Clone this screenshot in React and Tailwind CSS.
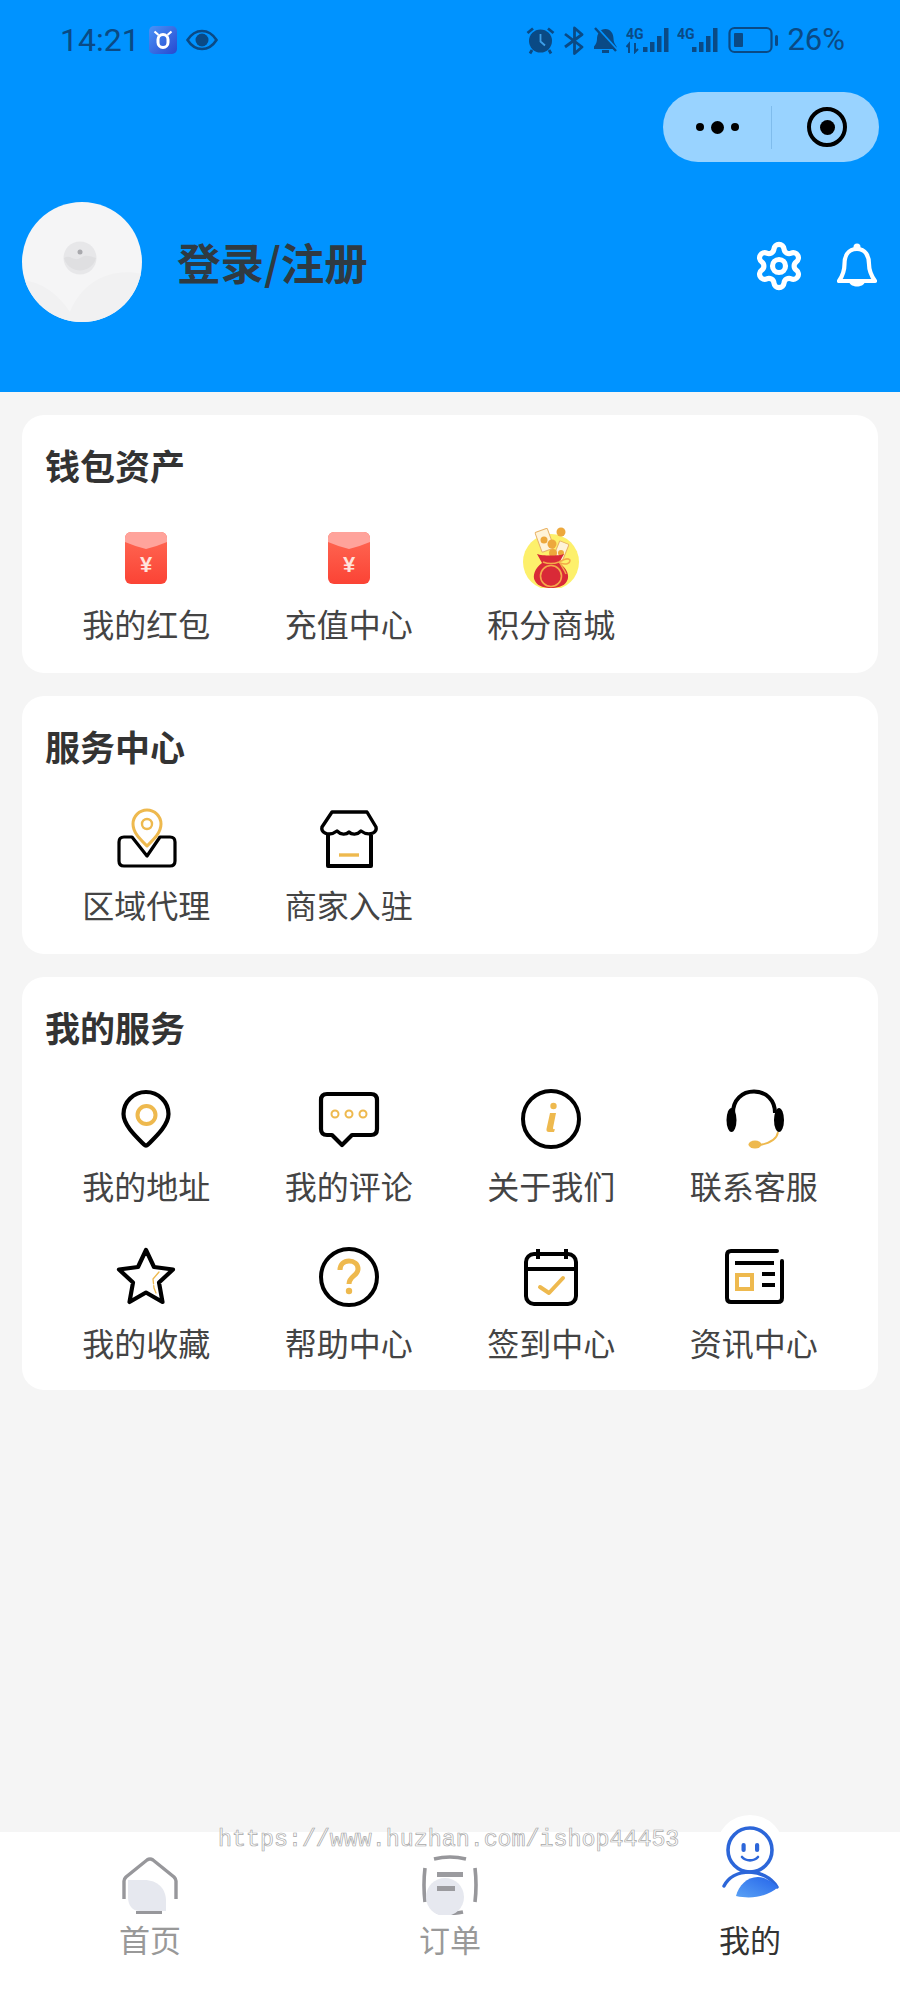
import { Settings } from "lucide-react";

const STATUS = "#0a4a85";
const GOLD = "#eeb94e";

const CJK = "font-['Noto_Sans_CJK_SC','Noto_Sans',sans-serif]";

function Box({ children }) {
  return (
    <svg width="64" height="64" viewBox="0 0 64 64" fill="none" className="block">
      {children}
    </svg>
  );
}

function RedPacket() {
  return (
    <Box>
      <defs>
        <linearGradient id="packet-body" x1="0" y1="0" x2="0" y2="1">
          <stop offset="0" stopColor="#ff6a55" />
          <stop offset="1" stopColor="#fb4335" />
        </linearGradient>
      </defs>
      <rect x="11" y="8" width="42" height="52" rx="6" fill="url(#packet-body)" />
      <path d="M11 14a6 6 0 0 1 6-6h30a6 6 0 0 1 6 6v4c-7 3-14 5-21 7-7-2-14-4-21-7z" fill="#ffa39b" />
      <text x="32" y="48" textAnchor="middle" fontSize="22" fontWeight="700" fill="#ffe3dc" fontFamily="Liberation Sans, sans-serif">¥</text>
    </Box>
  );
}

function GiftBag() {
  return (
    <Box>
      <circle cx="32" cy="38" r="28" fill="#fdf06b" />
      <rect x="19" y="6" width="13" height="21" rx="1" transform="rotate(-20 25 16)" fill="#fff3d8" stroke="#e9b366" strokeWidth="1" />
      <circle cx="25" cy="16" r="3.5" fill="#eda83c" />
      <rect x="37" y="18" width="10" height="18" rx="1" transform="rotate(22 42 27)" fill="#fff3d8" stroke="#e9b366" strokeWidth="1" />
      <circle cx="42" cy="8" r="4.5" fill="#eda83c" />
      <circle cx="33" cy="20" r="4.5" fill="#eda83c" />
      <circle cx="34" cy="29" r="4" fill="#eda83c" />
      <circle cx="42" cy="29" r="3" fill="#eda83c" />
      <path d="M18 30c5 2 22 2 27 0l-5 9c8 5 11 13 8 18-3 6-11 7-16 7s-13-1-16-7c-3-5 0-13 7-18z" fill="#d92a37" />
      <circle cx="32" cy="52" r="10.5" stroke="#f4a94a" strokeWidth="1.6" />
      <path d="M24 38c5 2 11 2 16 0M40 38c4-2 8-5 11-2 0 4-4 5-10 3m0 0c2 4 5 8 6 11" stroke="#f4a94a" strokeWidth="1.5" />
    </Box>
  );
}

function AreaIcon() {
  return (
    <Box>
      <path d="M18 32H10q-5 0-5 5v19q0 5 5 5h46q5 0 5-5V37q0-5-5-5H46L33 51Z" stroke="#000" strokeWidth="3.2" strokeLinejoin="round" />
      <path d="M33 41C27 35 19 28 19 19a14 14 0 0 1 28 0c0 9-8 16-14 22Z" fill="#fff" stroke={GOLD} strokeWidth="3" strokeLinejoin="round" />
      <circle cx="33" cy="19" r="5" stroke={GOLD} strokeWidth="2.4" />
    </Box>
  );
}

function StoreIcon() {
  return (
    <Box>
      <path d="M11 30v31h43V30" stroke="#000" strokeWidth="4" strokeLinejoin="round" />
      <path d="M15 7h35l9 15q1 4-3 6c-5 2-8 1-12-2-4 4-9 4-12 1-3 3-8 3-12-1-4 3-8 4-12 2q-4-2-3-6Z" fill="#fff" stroke="#000" strokeWidth="3.4" strokeLinejoin="round" />
      <path d="M22 50h20" stroke={GOLD} strokeWidth="3.4" />
    </Box>
  );
}

function PinIcon() {
  return (
    <Box>
      <path d="M32 6C19.5 6 9.5 16 9.5 28 9.5 39 22 50.500 30 58.500q2 2 4 0C42 50.500 54.500 39 54.500 28 54.500 16 44.500 6 32 6Z" stroke="#000" strokeWidth="4.2" strokeLinejoin="round" />
      <circle cx="32.5" cy="29" r="9" stroke={GOLD} strokeWidth="4" />
    </Box>
  );
}

function CommentIcon() {
  return (
    <Box>
      <path d="M10 8h44q6 0 6 6v29q0 6-6 6H35L25 59 15 49h-5q-6 0-6-6V14q0-6 6-6Z" stroke="#000" strokeWidth="4.2" strokeLinejoin="round" />
      <circle cx="18" cy="28" r="3.5" stroke={GOLD} strokeWidth="2" />
      <circle cx="32" cy="28" r="3.5" stroke={GOLD} strokeWidth="2" />
      <circle cx="46" cy="28" r="3.5" stroke={GOLD} strokeWidth="2" />
    </Box>
  );
}

function InfoIcon() {
  return (
    <Box>
      <circle cx="32" cy="33" r="28" stroke="#000" strokeWidth="4" />
      <circle cx="34.5" cy="20" r="3.2" fill={GOLD} />
      <path d="M31 27h6l-3 15q0 2 2 1l-1 3h-5q-3 0-2.500-3z" fill={GOLD} />
    </Box>
  );
}

function HeadsetIcon() {
  return (
    <Box>
      <path d="M11 27C11 14 20 5.500 32 5.500S53 14 53 27" stroke="#000" strokeWidth="4" />
      <ellipse cx="9.5" cy="34" rx="5" ry="12" fill="#000" />
      <ellipse cx="57" cy="34" rx="5" ry="12" fill="#000" />
      <path d="M56 46c-1 7-8 11-18 13" stroke={GOLD} strokeWidth="1.8" />
      <ellipse cx="33" cy="58.5" rx="6.5" ry="4" fill={GOLD} />
    </Box>
  );
}

function StarIcon() {
  return (
    <Box>
      <path d="M32 7l8 17 19 2.500-14 13L48.500 59 32 49.500 15.500 59 19 39.500l-14-13L24 24Z" stroke="#000" strokeWidth="4.2" strokeLinejoin="round" />
      <path d="M45 29l-6 7 1 9 2 5" stroke={GOLD} strokeWidth="1.3" strokeLinecap="round" strokeDasharray="14 2" />
    </Box>
  );
}

function HelpIcon() {
  return (
    <Box>
      <circle cx="32" cy="34" r="28" stroke="#000" strokeWidth="4" />
      <path d="M23 27c0-6 4-9 9-9s9 3 9 8c0 7-9 7-9 15" stroke={GOLD} strokeWidth="5" />
      <circle cx="32" cy="48" r="3.2" fill={GOLD} />
    </Box>
  );
}

function CalendarIcon() {
  return (
    <Box>
      <rect x="7" y="11" width="50" height="50" rx="8" stroke="#000" strokeWidth="4" />
      <path d="M7 26h50M19 6v10M47 6v10" stroke="#000" strokeWidth="4" />
      <path d="M21 44l9 6 14-15" stroke={GOLD} strokeWidth="4" strokeLinecap="round" strokeLinejoin="round" />
    </Box>
  );
}

function NewsIcon() {
  return (
    <Box>
      <path d="M55 8H9Q5 8 5 12v43q0 4 4 4h47q4 0 4-4V18" stroke="#000" strokeWidth="4" strokeLinecap="round" />
      <path d="M13 20h39M40 31h13M40 42h13" stroke="#000" strokeWidth="4" />
      <rect x="15" y="32" width="15" height="14" stroke={GOLD} strokeWidth="4" />
    </Box>
  );
}

function OxBadge() {
  return (
    <svg width="28" height="28" viewBox="0 0 28 28" fill="none">
      <defs>
        <linearGradient id="ox-bg" x1="0" y1="0" x2="1" y2="1">
          <stop offset="0" stopColor="#4a93f7" />
          <stop offset="1" stopColor="#2748cf" />
        </linearGradient>
      </defs>
      <rect width="28" height="28" rx="5" fill="url(#ox-bg)" />
      <rect x="9" y="8.500" width="10" height="13" rx="5" stroke="#fff" strokeWidth="3" />
      <path d="M5.500 5.500L9.500 9M22.500 5.500L18.500 9" stroke="#fff" strokeWidth="2.2" />
    </svg>
  );
}

function EyeIcon() {
  return (
    <svg width="32" height="22" viewBox="0 0 32 22" fill="none">
      <path d="M1.500 11C6 4 11 2 16 2s10 2 14.500 9C26 18 21 20 16 20S6 18 1.500 11Z" stroke={STATUS} strokeWidth="2.6" />
      <circle cx="16" cy="11" r="6.5" fill={STATUS} />
    </svg>
  );
}

function AlarmIcon() {
  return (
    <svg width="29" height="29" viewBox="0 0 29 29" fill="none">
      <circle cx="14.5" cy="15" r="11.5" fill={STATUS} />
      <path d="M14.500 8v7.500l4.500 4" stroke="#3d9fe8" strokeWidth="1.8" />
      <path d="M1.500 7L7 2.500M27.500 7L22 2.500M6 24l-2 3.500M23 24l2 3.500" stroke={STATUS} strokeWidth="2.8" />
    </svg>
  );
}

function BluetoothIcon() {
  return (
    <svg width="22" height="29" viewBox="0 0 22 29" fill="none">
      <path d="M2 8l17 13-7.500 6.500V2L19 8.500 2 21" stroke={STATUS} strokeWidth="2.8" strokeLinejoin="round" />
    </svg>
  );
}

function MutedBellIcon() {
  return (
    <svg width="25" height="27" viewBox="0 0 25 27" fill="none">
      <path d="M12.500 2C7 2 4 7 4 12c0 3-1 5-3 7.500V22h22.500v-2.500c-2-2.500-3-5-3-8 0-5-3-9.500-8-9.500Z" fill={STATUS} />
      <path d="M9 24.500h7" stroke={STATUS} strokeWidth="3" />
      <path d="M4 1l21 23" stroke="#0093ff" strokeWidth="2.6" />
      <path d="M2 1l21 23" stroke={STATUS} strokeWidth="2.4" />
    </svg>
  );
}

function SignalIcon({ arrows }) {
  const bars = arrows
    ? [[17, 20, 4.5, 5], [24, 15, 4.5, 10], [31, 9, 4.5, 16], [38, 1, 4.5, 24]]
    : [[15, 20, 4.5, 5], [22, 15, 4.5, 10], [29, 9, 4.5, 16], [36, 1, 4.5, 24]];
  return (
    <svg width="43" height="27" viewBox="0 0 43 27" fill="none">
      <text x="0" y="12" fontSize="14" fontWeight="700" fill={STATUS} fontFamily="Roboto, sans-serif">4G</text>
      {arrows && <path d="M3 26v-9l-2.500 3M9 16v9l3-3" stroke={STATUS} strokeWidth="2" />}
      {bars.map(([x, y, w, h]) => (
        <rect key={x} x={x} y={y} width={w} height={h} fill={STATUS} />
      ))}
    </svg>
  );
}

function BatteryIcon() {
  return (
    <svg width="51" height="28" viewBox="0 0 51 28" fill="none">
      <rect x="1.5" y="2" width="42" height="24" rx="5" stroke={STATUS} strokeWidth="2.2" />
      <rect x="6" y="7" width="9" height="14" rx="1" fill={STATUS} />
      <rect x="47" y="9" width="3" height="11" rx="1.5" fill={STATUS} />
    </svg>
  );
}

function Avatar() {
  return (
    <svg width="120" height="120" viewBox="0 0 120 120" className="block shrink-0">
      <clipPath id="avatar-clip">
        <circle cx="60" cy="60" r="60" />
      </clipPath>
      <g clipPath="url(#avatar-clip)">
        <rect width="120" height="120" fill="#f5f5f6" />
        <path d="M0 78c20 2 36 14 48 32 12-30 40-45 72-38v48H0z" fill="#f1f1f2" />
        <circle cx="58" cy="56" r="16.5" fill="#e7e7e9" />
        <path d="M42 56c6-4 10 4 16 0s10-2 16 0a16.500 16.500 0 0 1-32 0Z" fill="#dfdfe1" />
        <circle cx="58" cy="50" r="2.5" fill="#a9a9ad" />
      </g>
    </svg>
  );
}

function BellIcon() {
  return (
    <svg width="40" height="46" viewBox="0 0 40 46" fill="none">
      <circle cx="20" cy="4" r="3.5" fill="#fff" />
      <path d="M20 6C11 6 7.500 13 7.500 21c0 7-2 12-5.500 17h36c-3.500-5-6-10-6-17 0-8-3.500-15-12-15Z" stroke="#fff" strokeWidth="4.2" strokeLinejoin="round" />
      <path d="M12 39c2 6 14 6 16 0Z" fill="#fff" />
    </svg>
  );
}

function HomeTab() {
  return (
    <svg width="60" height="60" viewBox="0 0 60 60" fill="none">
      <path d="M4 44V26q0-2 2-4L27 5q3-2 6 0l21 17q2 2 2 4v18" stroke="#97979b" strokeWidth="3.4" />
      <path d="M16 57.500h26" stroke="#97979b" strokeWidth="3" />
      <path d="M8 25h16c14 0 22 9 22 21v10H20C12 56 8 50 8 42Z" fill="#e6e8ef" />
    </svg>
  );
}

function OrderTab() {
  return (
    <svg width="60" height="60" viewBox="0 0 60 60" fill="none">
      <path d="M14 4q16-4 32 0M17 57q13 3 26 0" stroke="#97979b" strokeWidth="3.4" />
      <path d="M5 13q-2 17 0 34M55 13q2 17 0 34" stroke="#97979b" strokeWidth="3.6" />
      <path d="M17 19.500h26" stroke="#9b9b9f" strokeWidth="5" />
      <circle cx="25" cy="42" r="19" fill="#e6e8ef" />
      <path d="M17 33.500h18" stroke="#9b9b9f" strokeWidth="5" />
    </svg>
  );
}

function MeTab() {
  return (
    <svg width="60" height="76" viewBox="0 0 60 76" fill="none">
      <defs>
        <linearGradient id="me-fill" x1="0" y1="1" x2="1" y2="0">
          <stop offset="0" stopColor="#5aa2f5" />
          <stop offset="1" stopColor="#2464ea" />
        </linearGradient>
      </defs>
      <circle cx="30" cy="26" r="22" stroke="#2c66d9" strokeWidth="3.6" />
      <rect x="21.5" y="19" width="4.2" height="9" rx="2.1" fill="#2c66d9" />
      <rect x="35" y="19" width="4.2" height="9" rx="2.1" fill="#2c66d9" />
      <path d="M22 33c4 4.500 12 4.500 16 0" stroke="#2c66d9" strokeWidth="2.6" strokeLinecap="round" />
      <path d="M4 62c4-8 13-14 26-14 9 0 21 5 27 15" stroke="#2c66d9" strokeWidth="3.4" strokeLinecap="round" />
      <path d="M16 72c3-12 14-22 28-18 5 2 10 5 14 9-8 8-24 13-42 9Z" fill="url(#me-fill)" />
    </svg>
  );
}

const SECTIONS = [
  {
    title: "钱包资产",
    items: [
      { label: "我的红包", Icon: RedPacket },
      { label: "充值中心", Icon: RedPacket },
      { label: "积分商城", Icon: GiftBag },
    ],
  },
  {
    title: "服务中心",
    items: [
      { label: "区域代理", Icon: AreaIcon },
      { label: "商家入驻", Icon: StoreIcon },
    ],
  },
  {
    title: "我的服务",
    items: [
      { label: "我的地址", Icon: PinIcon },
      { label: "我的评论", Icon: CommentIcon },
      { label: "关于我们", Icon: InfoIcon },
      { label: "联系客服", Icon: HeadsetIcon },
      { label: "我的收藏", Icon: StarIcon },
      { label: "帮助中心", Icon: HelpIcon },
      { label: "签到中心", Icon: CalendarIcon },
      { label: "资讯中心", Icon: NewsIcon },
    ],
  },
];

function Section({ title, items }) {
  return (
    <section className="rounded-[22px] bg-white pt-[28px] pb-[30px] last:pb-[28px]">
      <h2 className="px-[23px] text-[35px] leading-[44px] font-bold text-[#333]">{title}</h2>
      <div className="mt-[37px] grid grid-cols-4 gap-y-[38px] px-[23px]">
        {items.map(({ label, Icon }) => (
          <div key={label} className="flex flex-col items-center">
            <Icon />
            <span className="mt-[15px] text-[32px] leading-[40px] text-[#444]">{label}</span>
          </div>
        ))}
      </div>
    </section>
  );
}

export default function App() {
  return (
    <div className={`relative flex min-h-[2000px] w-[900px] flex-col overflow-hidden bg-[#f5f5f5] ${CJK}`}>
      <header className="h-[392px] shrink-0 bg-[#0093ff]">
        {/* status bar */}
        <div className="flex h-[92px] items-start justify-between pt-[22px] pr-[55px] pl-[60px]">
          <div className="flex items-center gap-[9px] font-['Roboto',sans-serif] text-[32px] leading-[36px] text-[#0a4a85]">
            <span>14:21</span>
            <OxBadge />
            <EyeIcon />
          </div>
          <div className="flex items-center gap-[8px] font-['Roboto',sans-serif] text-[31px] leading-[36px] text-[#0a4a85]">
            <AlarmIcon />
            <BluetoothIcon />
            <MutedBellIcon />
            <SignalIcon arrows />
            <SignalIcon />
            <BatteryIcon />
            <span>26%</span>
          </div>
        </div>

        {/* mini program capsule */}
        <div className="flex justify-end pr-[21px]">
          <div className="flex h-[70px] w-[216px] items-center rounded-full bg-[#99d3ff]">
            <div className="flex w-[108px] items-center justify-center gap-[7px]">
              <span className="h-[8px] w-[8px] rounded-full bg-black" />
              <span className="h-[13px] w-[13px] rounded-full bg-black" />
              <span className="h-[8px] w-[8px] rounded-full bg-black" />
            </div>
            <div className="h-[43px] w-px bg-[#7fbcec]" />
            <div className="flex flex-1 items-center justify-center pl-[3px]">
              <span className="flex h-[40px] w-[40px] items-center justify-center rounded-full border-[4px] border-black">
                <span className="h-[15px] w-[15px] rounded-full bg-black" />
              </span>
            </div>
          </div>
        </div>

        {/* profile */}
        <div className="mt-[40px] flex items-center pr-[23px] pl-[22px]">
          <Avatar />
          <span className="ml-[35px] text-[43.500px] leading-[56px] font-bold text-[#2f3a42]">登录/注册</span>
          <div className="mt-[8px] ml-auto flex items-center gap-[32px]">
            <Settings size={52} color="#fff" strokeWidth={2.4} />
            <BellIcon />
          </div>
        </div>
      </header>

      <main className="flex flex-1 flex-col gap-[23px] px-[22px] pt-[23px]">
        {SECTIONS.map((s) => (
          <Section key={s.title} title={s.title} items={s.items} />
        ))}
      </main>

      {/* tab bar */}
      <nav className="relative grid h-[168px] shrink-0 grid-cols-3 bg-white">
        <div className="flex flex-col items-center pt-[23px]">
          <HomeTab />
          <span className="mt-[4px] text-[31px] leading-[40px] text-[#999]">首页</span>
        </div>
        <div className="flex flex-col items-center pt-[23px]">
          <OrderTab />
          <span className="mt-[4px] text-[31px] leading-[40px] text-[#999]">订单</span>
        </div>
        <div className="flex flex-col items-center pt-[87px]">
          <span className="text-[31px] leading-[40px] text-[#333]">我的</span>
        </div>
        {/* raised active tab icon */}
        <div className="absolute top-[-17px] left-[716px] flex h-[72px] w-[68px] justify-center rounded-full bg-white pt-[9px]">
          <div className="h-[76px]">
            <MeTab />
          </div>
        </div>
      </nav>

      {/* site watermark */}
      <div className="pointer-events-none absolute top-[1822px] left-[218px] font-['Liberation_Mono',monospace] text-[23.300px] leading-[36px] whitespace-nowrap text-white [-webkit-text-stroke:0.7px_#a8a8a8]">
        https://www.huzhan.com/ishop44453
      </div>
    </div>
  );
}
